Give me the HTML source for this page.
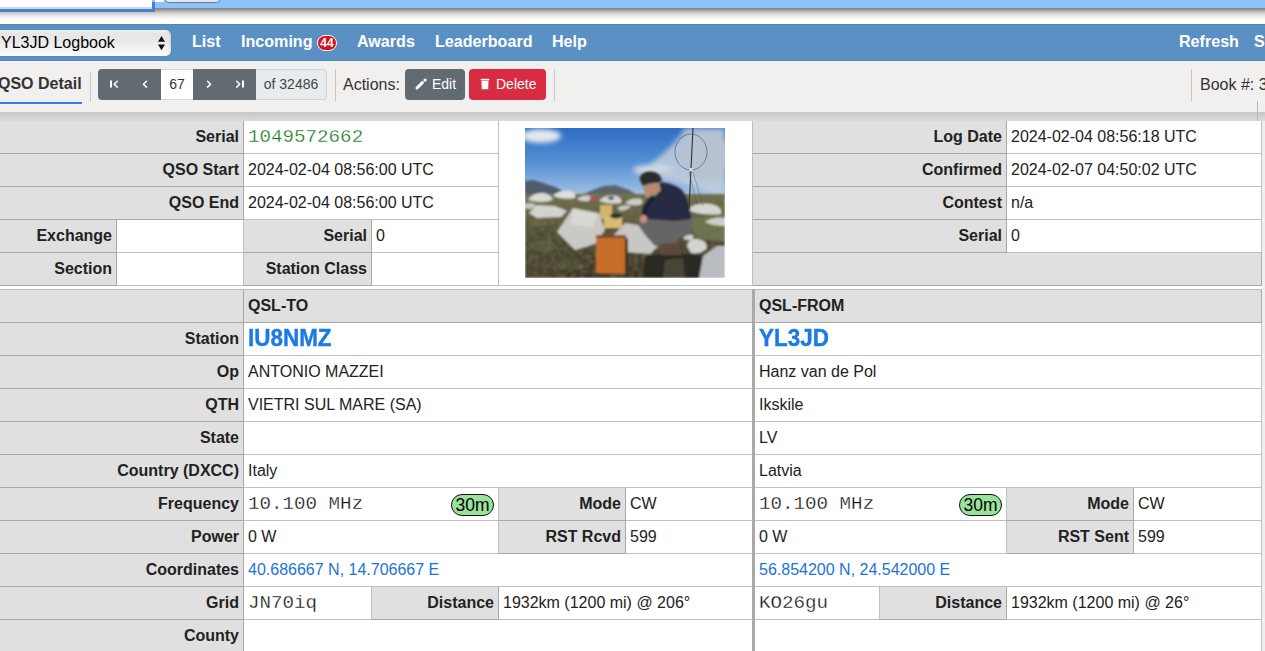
<!DOCTYPE html>
<html><head><meta charset="utf-8">
<style>
*{box-sizing:border-box}
html,body{margin:0;padding:0}
body{width:1265px;height:651px;overflow:hidden;position:relative;background:#fff;font-family:"Liberation Sans",sans-serif;color:#222}
.abs{position:absolute}
/* top strip */
#strip{left:0;top:0;width:1265px;height:8px;background:#8dc3fb}
#stripshadow{left:0;top:8px;width:1265px;height:12px;background:linear-gradient(#7c828a,#959595 14%,#c4c4c4 35%,#e4e4e4 58%,#f7f7f7 82%,#fff)}
#inp{left:0;top:0;width:152px;height:7px;background:#fff}
#inpline{left:0;top:7px;width:152px;height:2px;background:#c9d6ea}
#ring-b{left:0;top:9px;width:155px;height:3px;background:#4a7fd0;border-radius:0 0 3px 0}
#ring-r{left:152px;top:2px;width:3px;height:10px;background:#4a7fd0}
#gap{left:155px;top:0;width:9px;height:2px;background:#fff}
#btn{left:164px;top:-4px;width:57px;height:7px;background:#e6e6e6;border:1px solid #5d7fa8;border-top:0;border-radius:0 0 5px 5px}
/* nav */
#nav{left:0;top:24px;width:1265px;height:37px;background:#5a90c4}
#sel{left:-8px;top:30px;width:179px;height:26px;border-radius:5px;background:linear-gradient(#f2f2f2,#e6e6e6 12%,#e9e9e9 45%,#fefefe);box-shadow:0 0 1px rgba(0,0,0,.35),inset -2px 0 2px -1px rgba(0,0,0,.12)}
#seltxt{left:1px;top:30px;height:26px;line-height:26px;font-size:16px;color:#000}
.nl{position:absolute;top:23px;height:37px;line-height:37px;font-size:16.1px;font-weight:bold;color:#fff;white-space:nowrap}
#badge44{left:317px;top:35px;width:20px;height:16px;border-radius:8px;background:#d9101a;border:1px solid #fff;color:#fff;font-size:12px;font-weight:bold;line-height:14px;text-align:center}
/* toolbar */
#tb{left:0;top:61px;width:1265px;height:51px;background:#f1f0ee}
#tbshadow{left:0;top:112px;width:1265px;height:9px;background:linear-gradient(#c6c6c4,#dcdcdc);z-index:5}
#tab{left:-2px;top:58px;height:51px;line-height:51px;font-size:16px;font-weight:bold;color:#333;white-space:nowrap}
#tabline{left:0;top:102px;width:82px;height:2px;background:#2f7fe0}
.sep{position:absolute;width:1px;background:#c8c8c8}
#pager{left:98px;top:69px;width:229px;height:31px}
.pbtn{position:absolute;top:69px;height:31px;background:#626a72;color:#fff}
#pnum{left:161px;top:69px;width:32px;height:31px;background:#fff;border-top:1px solid #d6d6d6;border-bottom:1px solid #d6d6d6;font-size:14px;line-height:29px;text-align:center;color:#333}
#pof{left:256px;top:69px;width:71px;height:31px;background:#e9ecef;border:1px solid #ced4da;border-left:0;border-radius:0 4px 4px 0;font-size:14px;line-height:29px;text-align:center;color:#444}
#actions{left:343px;top:59px;height:51px;line-height:51px;font-size:16px;color:#333}
#edit{left:405px;top:69px;width:60px;height:31px;border-radius:4px;background:#626a72;color:#fff;font-size:14px;line-height:31px}
#del{left:469px;top:69px;width:77px;height:31px;border-radius:4px;background:#d92b41;color:#fff;font-size:14px;line-height:31px}
#book{left:1200px;top:59px;height:51px;line-height:51px;font-size:16px;color:#333;white-space:nowrap}
/* table */
#rightstrip{left:1262px;top:121px;width:3px;height:530px;background:#f0efed}
.c{position:absolute;border-right:1px solid rgba(0,0,0,.25);border-bottom:1px solid rgba(0,0,0,.25);font-size:16px;line-height:32px;white-space:nowrap;overflow:hidden;color:#222}
.lab{background:#e0e0e0;font-weight:bold;text-align:right;padding-right:4px}
.val{background:#fff;padding-left:4px}
.hdr{background:#e0e0e0;font-weight:bold;padding-left:4px}
.mono{font-family:"Liberation Mono",monospace;font-size:19.2px;-webkit-text-stroke:0.3px #fff}
.band{position:absolute;right:4px;top:6px;width:43px;height:22px;border:1px solid #111;border-radius:11px;background:#98e29a;color:#000;font-size:17.5px;line-height:20px;text-align:center}
.call{display:inline-block;position:relative;top:-1.5px;font-size:23.5px;font-weight:bold;color:#1a7be6;transform:scaleX(0.955);transform-origin:0 50%;-webkit-text-stroke:0.4px #1a7be6}
.lnk{color:#1a73d9}
#thick{left:752px;top:289px;width:3px;height:362px;background:#a9a9a9}
#photo{left:525px;top:128px;width:200px;height:150px;z-index:2}
</style></head><body>
<div class="abs" id="strip"></div>
<div class="abs" id="stripshadow"></div>
<div class="abs" id="inp"></div>
<div class="abs" id="inpline"></div>
<div class="abs" id="ring-b"></div>
<div class="abs" id="ring-r"></div>
<div class="abs" id="gap"></div>
<div class="abs" id="btn"></div>

<div class="abs" id="nav"></div>
<div class="abs" style="left:0;top:24px;width:1265px;height:1px;background:#5884af"></div>
<div class="abs" id="sel"></div>
<div class="abs" id="seltxt">YL3JD Logbook</div>
<svg class="abs" style="left:158px;top:36px" width="7" height="15" viewBox="0 0 7 15"><path d="M3.5 0L7 5.8H0Z M3.5 14.3L7 8.4H0Z" fill="#111"/></svg>
<div class="nl" style="left:192px">List</div>
<div class="nl" style="left:241px">Incoming</div>
<div class="abs" id="badge44">44</div>
<div class="nl" style="left:357px">Awards</div>
<div class="nl" style="left:435px">Leaderboard</div>
<div class="nl" style="left:552px">Help</div>
<div class="nl" style="left:1179px">Refresh</div>
<div class="nl" style="left:1254px">S</div>

<div class="abs" id="tb"></div>
<div class="abs" style="left:0;top:60px;width:1265px;height:1px;background:#5b84ae"></div>
<div class="abs" style="left:0;top:61px;width:1265px;height:1px;background:#e9f4fc"></div>
<div class="abs" id="tab">QSO Detail</div>
<div class="abs" id="tabline"></div>
<div class="sep" style="left:90px;top:72px;height:30px"></div>
<div class="pbtn" style="left:98px;width:63px;border-radius:4px 0 0 4px"></div>
<div class="pbtn" style="left:193px;width:63px"></div>
<svg class="abs" style="left:98px;top:69px" width="158" height="31" viewBox="0 0 158 31">
 <g fill="none" stroke="#fff" stroke-width="1.5" stroke-linecap="round" stroke-linejoin="round">
  <path d="M13 11.6V18.4" stroke-width="2" stroke-linecap="butt"/><path d="M19.3 12.3L16.2 15.2L19.3 18.1"/>
  <path d="M48.5 12.3L45.4 15.2L48.5 18.1"/>
  <path d="M109.5 12.3L112.6 15.2L109.5 18.1"/>
  <path d="M138.7 12.3L141.8 15.2L138.7 18.1"/><path d="M145 11.6V18.4" stroke-width="2" stroke-linecap="butt"/>
 </g>
</svg>
<div class="abs" id="pnum">67</div>
<div class="abs" id="pof">of 32486</div>
<div class="sep" style="left:335px;top:69px;height:32px"></div>
<div class="abs" id="actions">Actions:</div>
<div class="abs" id="edit"><svg class="abs" style="left:0;top:0" width="60" height="31" viewBox="0 0 60 31"><path d="M12 19L17.4 13.6" stroke="#fff" stroke-width="3" stroke-linecap="round"/><circle cx="20.1" cy="11.1" r="1.6" fill="#fff"/></svg><span class="abs" style="left:27px;top:0">Edit</span></div>
<div class="abs" id="del"><svg class="abs" style="left:0;top:0" width="77" height="31" viewBox="0 0 77 31"><rect x="11.8" y="9.8" width="8.5" height="1.5" fill="#fff"/><path d="M12.5 11.8H19.5L19.2 20.3H12.8Z" fill="#fff"/></svg><span class="abs" style="left:27px;top:0">Delete</span></div>
<div class="sep" style="left:554px;top:69px;height:32px"></div>
<div class="sep" style="left:1191px;top:69px;height:32px"></div>
<div class="abs" id="book">Book #: 3</div>
<div class="abs" id="tbshadow"></div>
<div class="abs" style="left:1257px;top:101px;width:1px;height:20px;background:#b8b8b8;z-index:6"></div>

<div class="abs" id="rightstrip"></div>
<div class="c lab" style="left:-10px;top:121px;width:254px;height:33px">Serial</div>
<div class="c val" style="left:244px;top:121px;width:255px;height:33px"><span class="mono" style="color:#16781a">1049572662</span></div>
<div class="c lab" style="left:753px;top:121px;width:254px;height:33px">Log Date</div>
<div class="c val" style="left:1007px;top:121px;width:255px;height:33px">2024-02-04 08:56:18 UTC</div>
<div class="c lab" style="left:-10px;top:154px;width:254px;height:33px">QSO Start</div>
<div class="c val" style="left:244px;top:154px;width:255px;height:33px">2024-02-04 08:56:00 UTC</div>
<div class="c lab" style="left:753px;top:154px;width:254px;height:33px">Confirmed</div>
<div class="c val" style="left:1007px;top:154px;width:255px;height:33px">2024-02-07 04:50:02 UTC</div>
<div class="c lab" style="left:-10px;top:187px;width:254px;height:33px">QSO End</div>
<div class="c val" style="left:244px;top:187px;width:255px;height:33px">2024-02-04 08:56:00 UTC</div>
<div class="c lab" style="left:753px;top:187px;width:254px;height:33px">Contest</div>
<div class="c val" style="left:1007px;top:187px;width:255px;height:33px">n/a</div>
<div class="c val" style="left:499px;top:121px;width:254px;height:165px"></div>
<div class="c lab" style="left:-10px;top:220px;width:127px;height:33px">Exchange</div>
<div class="c val" style="left:117px;top:220px;width:127px;height:33px"></div>
<div class="c lab" style="left:244px;top:220px;width:128px;height:33px">Serial</div>
<div class="c val" style="left:372px;top:220px;width:127px;height:33px">0</div>
<div class="c lab" style="left:753px;top:220px;width:254px;height:33px">Serial</div>
<div class="c val" style="left:1007px;top:220px;width:255px;height:33px">0</div>
<div class="c lab" style="left:-10px;top:253px;width:127px;height:33px">Section</div>
<div class="c val" style="left:117px;top:253px;width:127px;height:33px"></div>
<div class="c lab" style="left:244px;top:253px;width:128px;height:33px">Station Class</div>
<div class="c val" style="left:372px;top:253px;width:127px;height:33px"></div>
<div class="c lab" style="left:753px;top:253px;width:509px;height:33px"></div>
<div class="c lab" style="left:-10px;top:290px;width:254px;height:33px"></div>
<div class="c hdr" style="left:244px;top:290px;width:509px;height:33px">QSL-TO</div>
<div class="c hdr" style="left:755px;top:290px;width:507px;height:33px">QSL-FROM</div>
<div class="c lab" style="left:-10px;top:323px;width:254px;height:33px">Station</div>
<div class="c val" style="left:244px;top:323px;width:509px;height:33px"><span class="call">IU8NMZ</span></div>
<div class="c val" style="left:755px;top:323px;width:507px;height:33px"><span class="call">YL3JD</span></div>
<div class="c lab" style="left:-10px;top:356px;width:254px;height:33px">Op</div>
<div class="c val" style="left:244px;top:356px;width:509px;height:33px">ANTONIO MAZZEI</div>
<div class="c val" style="left:755px;top:356px;width:507px;height:33px">Hanz van de Pol</div>
<div class="c lab" style="left:-10px;top:389px;width:254px;height:33px">QTH</div>
<div class="c val" style="left:244px;top:389px;width:509px;height:33px">VIETRI SUL MARE (SA)</div>
<div class="c val" style="left:755px;top:389px;width:507px;height:33px">Ikskile</div>
<div class="c lab" style="left:-10px;top:422px;width:254px;height:33px">State</div>
<div class="c val" style="left:244px;top:422px;width:509px;height:33px"></div>
<div class="c val" style="left:755px;top:422px;width:507px;height:33px">LV</div>
<div class="c lab" style="left:-10px;top:455px;width:254px;height:33px">Country (DXCC)</div>
<div class="c val" style="left:244px;top:455px;width:509px;height:33px">Italy</div>
<div class="c val" style="left:755px;top:455px;width:507px;height:33px">Latvia</div>
<div class="c lab" style="left:-10px;top:554px;width:254px;height:33px">Coordinates</div>
<div class="c val" style="left:244px;top:554px;width:509px;height:33px"><span class="lnk">40.686667 N, 14.706667 E</span></div>
<div class="c val" style="left:755px;top:554px;width:507px;height:33px"><span class="lnk">56.854200 N, 24.542000 E</span></div>
<div class="c lab" style="left:-10px;top:620px;width:254px;height:33px">County</div>
<div class="c val" style="left:244px;top:620px;width:509px;height:33px"></div>
<div class="c val" style="left:755px;top:620px;width:507px;height:33px"></div>
<div class="c lab" style="left:-10px;top:488px;width:254px;height:33px">Frequency</div>
<div class="c val" style="left:244px;top:488px;width:255px;height:33px"><span class="mono" style="color:#111">10.100 MHz</span><span class="band">30m</span></div>
<div class="c lab" style="left:499px;top:488px;width:127px;height:33px">Mode</div>
<div class="c val" style="left:626px;top:488px;width:127px;height:33px">CW</div>
<div class="c val" style="left:755px;top:488px;width:252px;height:33px"><span class="mono" style="color:#111">10.100 MHz</span><span class="band">30m</span></div>
<div class="c lab" style="left:1007px;top:488px;width:127px;height:33px">Mode</div>
<div class="c val" style="left:1134px;top:488px;width:128px;height:33px">CW</div>
<div class="c lab" style="left:-10px;top:521px;width:254px;height:33px">Power</div>
<div class="c val" style="left:244px;top:521px;width:255px;height:33px">0 W</div>
<div class="c lab" style="left:499px;top:521px;width:127px;height:33px">RST Rcvd</div>
<div class="c val" style="left:626px;top:521px;width:127px;height:33px">599</div>
<div class="c val" style="left:755px;top:521px;width:252px;height:33px">0 W</div>
<div class="c lab" style="left:1007px;top:521px;width:127px;height:33px">RST Sent</div>
<div class="c val" style="left:1134px;top:521px;width:128px;height:33px">599</div>
<div class="c lab" style="left:-10px;top:587px;width:254px;height:33px">Grid</div>
<div class="c val" style="left:244px;top:587px;width:128px;height:33px"><span class="mono" style="color:#111">JN70iq</span></div>
<div class="c lab" style="left:372px;top:587px;width:127px;height:33px">Distance</div>
<div class="c val" style="left:499px;top:587px;width:254px;height:33px">1932km (1200 mi) @ 206°</div>
<div class="c val" style="left:755px;top:587px;width:125px;height:33px"><span class="mono" style="color:#111">KO26gu</span></div>
<div class="c lab" style="left:880px;top:587px;width:127px;height:33px">Distance</div>
<div class="c val" style="left:1007px;top:587px;width:255px;height:33px">1932km (1200 mi) @ 26°</div>
<div class="abs" style="left:0;top:289px;width:1262px;height:1px;background:#bdbdbd"></div>
<div class="abs" id="thick"></div>
<div class="abs" id="photo"><svg width="200" height="150" viewBox="0 0 200 150" style="display:block">
<defs>
<linearGradient id="sky" x1="0" y1="0" x2="0" y2="1">
<stop offset="0" stop-color="#2f6cc3"/><stop offset="0.5" stop-color="#5590d4"/><stop offset="1" stop-color="#a9c6e6"/>
</linearGradient>
<linearGradient id="gnd" x1="0" y1="0" x2="0" y2="1">
<stop offset="0" stop-color="#737250"/><stop offset="0.45" stop-color="#555234"/><stop offset="1" stop-color="#372f22"/>
</linearGradient>
<filter id="bl" x="-5%" y="-5%" width="110%" height="110%"><feGaussianBlur stdDeviation="0.9"/></filter>
<filter id="bl2" x="-20%" y="-20%" width="140%" height="140%"><feGaussianBlur stdDeviation="2.5"/></filter>
<clipPath id="cp"><rect width="200" height="150"/></clipPath>
<filter id="tex" x="0" y="0" width="100%" height="100%"><feTurbulence type="fractalNoise" baseFrequency="0.22" numOctaves="3" seed="7"/><feColorMatrix type="matrix" values="0 0 0 0 0.15  0 0 0 0 0.14  0 0 0 0 0.08  0 0 0 -2.2 1.35"/></filter>
<filter id="tex2" x="0" y="0" width="100%" height="100%"><feTurbulence type="fractalNoise" baseFrequency="0.3" numOctaves="2" seed="3"/><feColorMatrix type="matrix" values="0 0 0 0 0.55  0 0 0 0 0.6  0 0 0 0 0.35  0 0 0 2.4 -1.45"/></filter>
</defs>
<g clip-path="url(#cp)">
<rect width="200" height="70" fill="url(#sky)"/>
<g filter="url(#bl2)">
<ellipse cx="16" cy="8" rx="20" ry="7" fill="#e2e8f0"/>
<path d="M200 0 L160 0 Q150 18 125 36 L108 46 Q150 52 200 70 Z" fill="#c3cedc" opacity="0.85"/>
<ellipse cx="182" cy="28" rx="24" ry="24" fill="#b7c2d0"/>
<ellipse cx="128" cy="41" rx="20" ry="4" fill="#cfd9e5"/>
</g>
<g filter="url(#bl)">
<path d="M0 53 L8 52 L18 55 L30 59 L40 64 L0 70 Z" fill="#4f5b6b"/>
<path d="M58 66 L78 58 L90 57 L104 62 L114 68 L58 70 Z" fill="#5d636a"/>
<path d="M130 70 L200 67 L200 80 L130 80 Z" fill="#7a8da5"/>
<rect x="0" y="66" width="200" height="84" fill="url(#gnd)"/>
<path d="M0 92 Q30 92 45 118 L36 150 L0 150 Z" fill="#4a4830" opacity="0.6"/>
<ellipse cx="18" cy="118" rx="12" ry="6" fill="#646a40" opacity="0.5"/>
<path d="M165 90 L200 86 L200 114 L170 110 Z" fill="#6e7550"/>
<ellipse cx="45" cy="138" rx="14" ry="5" fill="#5a6038" opacity="0.5"/><ellipse cx="12" cy="95" rx="10" ry="4" fill="#6f7048" opacity="0.6"/>
<rect x="0" y="80" width="200" height="70" filter="url(#tex)" opacity="0.8"/><rect x="0" y="72" width="200" height="78" filter="url(#tex2)" opacity="0.35"/>
<!-- horizon rocks -->
<path d="M3 72 Q8 64 18 65 Q26 66 28 72 Q16 76 3 72Z" fill="#d9d9d5"/>
<path d="M28 68 Q36 61 46 63 Q52 66 50 70 Q38 72 28 68Z" fill="#dededa"/>
<path d="M52 71 Q58 66 66 68 L64 73 Q56 74 52 71Z" fill="#cfcfcb"/>
<path d="M74 73 Q80 66 92 68 Q98 71 96 75 Q84 77 74 73Z" fill="#d4d4d0"/>
<path d="M100 75 Q106 69 116 71 Q120 75 114 77 Q106 78 100 75Z" fill="#cdcdc9"/>
<ellipse cx="5" cy="78" rx="6" ry="3" fill="#c8c8c4"/>
<ellipse cx="68" cy="70" rx="3" ry="2.3" fill="#c9406a"/>
<ellipse cx="86" cy="70" rx="3" ry="1.5" fill="#333"/>
<path d="M92 80 Q98 76 106 78 Q104 82 96 83Z" fill="#c8c8c4"/>
<path d="M162 82 Q170 74 186 76 Q198 79 196 86 Q178 88 162 82Z" fill="#d6d6d2"/>
<path d="M180 94 Q188 88 200 90 L200 98 Q188 98 180 94Z" fill="#cdcdc9"/>
<!-- left mid rock -->
<path d="M4 85 L12 77 L30 78 L42 83 L36 89 L12 90 Z" fill="#d2d2ce"/>
<!-- big rock -->
<path d="M32 104 L48 80 L74 85 L80 102 L70 116 L50 122 Z" fill="#c9c9c5"/>
<path d="M48 81 L72 86 L68 100 L46 96 Z" fill="#d8d8d4"/>
<!-- right rock behind box -->
<path d="M86 110 L100 95 L120 98 L133 118 L125 126 L100 124 Z" fill="#c7c7c3"/>
<!-- tan open box -->
<rect x="75" y="77" width="12" height="14" fill="#d2b36a"/>
<rect x="79" y="88" width="18" height="12" fill="#d8bc72"/>
<ellipse cx="91" cy="88" rx="6" ry="2.5" fill="#2a2a30"/>
<!-- orange box -->
<path d="M71 108 L100 109 L100 146 L71 145 Z" fill="#c66e2c"/>
<rect x="71" y="107" width="30" height="3" fill="#7a4a28"/>
<path d="M100 109 L103 111 L103 144 L100 146 Z" fill="#3a2e22"/>
<!-- shadow -->
<path d="M120 128 Q150 122 180 128 L178 150 L118 150 Z" fill="#2c2a24"/>
<path d="M140 132 L158 130 L160 150 L138 150 Z" fill="#4a4434"/>
<!-- right rocks -->
<path d="M162 118 Q164 110 172 111 Q182 112 182 120 Q176 127 166 125Z" fill="#d4d4d0"/>
<path d="M174 150 L178 128 L192 118 L200 118 L200 150 Z" fill="#b9bcc0"/>
<path d="M158 110 Q162 105 168 107 L168 112 Q162 113 158 110Z" fill="#cfcfcb"/>
<!-- person -->
<path d="M113 97 Q114 88 122 88 L166 90 Q169 100 166 106 L152 111 L149 118 L130 118 Q120 108 113 97 Z" fill="#656567"/>
<path d="M134 116 L153 115 L157 127 L136 127 Z" fill="#5b4c3c"/>
<path d="M136 54 Q150 56 157 62 Q165 71 166 91 L150 93 L122 91 Q118 84 121 76 L124 70 L130 62 Z" fill="#262c42"/>
<path d="M133 60 L120 80 L119 88" stroke="#1e2336" stroke-width="5" fill="none" stroke-linecap="round"/>
<path d="M118 55 Q126 53 134 55 L136 62 L130 68 L121 67 L118 60 Z" fill="#b48a72"/>
<path d="M114.5 51 Q116 43 126 43.5 Q135 44 137 52 L134 55 Q126 54 118 58 Z" fill="#2a2a2a"/>
<ellipse cx="123" cy="67" rx="2.6" ry="2.4" fill="#bf8f78"/>
<ellipse cx="118.5" cy="91" rx="3.5" ry="4" fill="#c8907a"/>
</g>
<!-- antenna -->
<path d="M168 0 L164 81" stroke="#2e3138" stroke-width="1.1" fill="none"/>
<ellipse cx="166" cy="24" rx="16" ry="18" stroke="#4a4e56" stroke-width="0.6" fill="none"/>
<rect x="164.5" y="40" width="3" height="3" fill="#e0e0e0"/>
<path d="M164 44 L172 76 M168 44 L178 78" stroke="#555" stroke-width="0.4" fill="none"/>
</g>
</svg>
</div>
</body></html>
